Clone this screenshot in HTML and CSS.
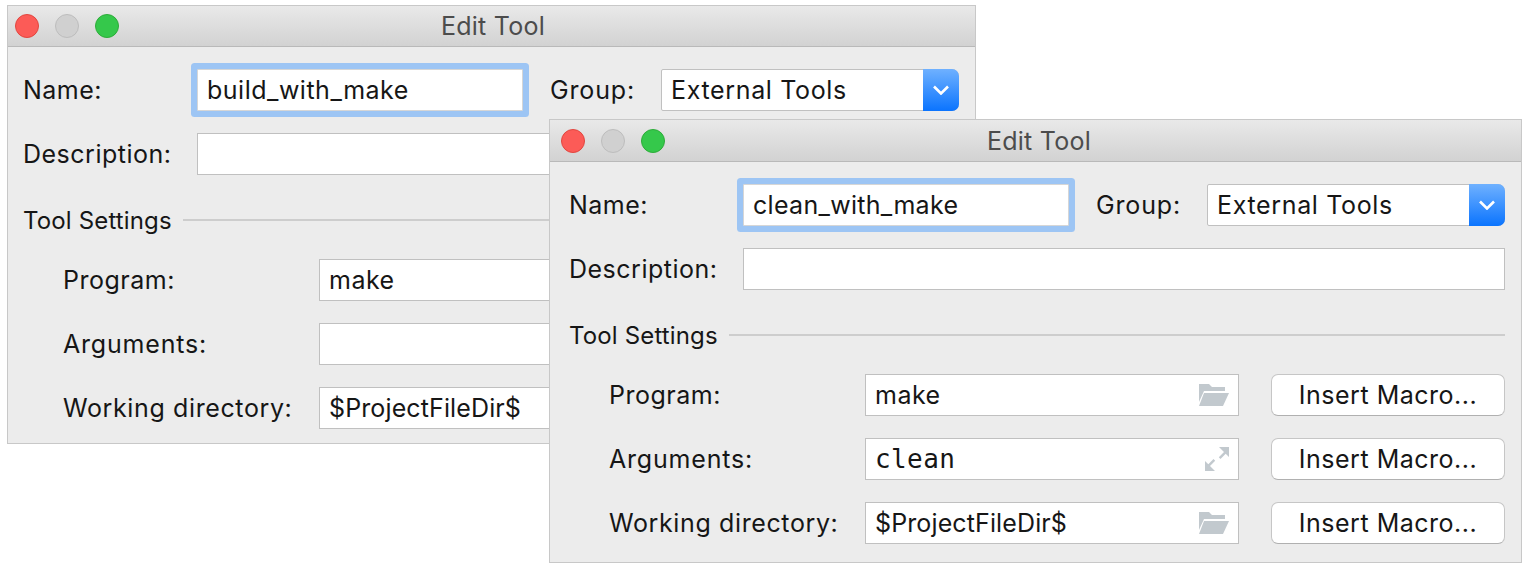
FILE: index.html
```html
<!DOCTYPE html>
<html lang="en">
<head>
<meta charset="utf-8">
<title>Edit Tool</title>
<link rel="stylesheet" href="styles.css">
</head>
<body>
<svg class="defs" width="0" height="0" aria-hidden="true">
  <symbol id="folder" viewBox="0 0 30 22"><path d="M0 0h10l3 3h13v4H5L0 18z"/><path d="M5 9h25l-6 13H0z"/></symbol>
  <symbol id="expand" viewBox="0 0 24 24"><path d="M14 0h10v10l-3.300-3.300-5.200 5.200-1.700-1.700 5.200-5.200z"/><path d="M10 24H0V14l3.300 3.300 5.200-5.200 1.700 1.700-5.200 5.200z"/></symbol>
  <symbol id="chevron" viewBox="0 0 16 10"><path d="M1 1.500 8 8.500l7-7" fill="none" stroke="#fff" stroke-width="2.600"/></symbol>
</svg>

<section class="window window-back">
  <header class="titlebar">
    <span class="light light-close"></span><span class="light light-min"></span><span class="light light-zoom"></span>
    <h1 class="title">Edit Tool</h1>
  </header>
  <div class="content">
    <div class="row">
      <label class="label label-top">Name:</label>
      <div class="field field-name focused">build_with_make</div>
      <label class="label label-group">Group:</label>
      <div class="select"><span class="select-text">External Tools</span><span class="select-btn"><svg class="chevron"><use href="#chevron"/></svg></span></div>
    </div>
    <div class="row">
      <label class="label label-top">Description:</label>
      <div class="field field-grow"></div>
    </div>
    <div class="section"><span>Tool Settings</span><i class="rule"></i></div>
    <div class="row row-sub">
      <label class="label label-sub">Program:</label>
      <div class="field field-grow">make</div>
    </div>
    <div class="row row-sub">
      <label class="label label-sub label-args">Arguments:</label>
      <div class="field field-grow"></div>
    </div>
    <div class="row row-sub">
      <label class="label label-sub label-dir">Working directory:</label>
      <div class="field field-grow"><span class="path">$ProjectFileDir$</span></div>
    </div>
  </div>
</section>

<section class="window window-front">
  <header class="titlebar">
    <span class="light light-close"></span><span class="light light-min"></span><span class="light light-zoom"></span>
    <h1 class="title">Edit Tool</h1>
  </header>
  <div class="content">
    <div class="row">
      <label class="label label-top">Name:</label>
      <div class="field field-name focused"><span class="name-clean">clean_with_make</span></div>
      <label class="label label-group">Group:</label>
      <div class="select"><span class="select-text">External Tools</span><span class="select-btn"><svg class="chevron"><use href="#chevron"/></svg></span></div>
    </div>
    <div class="row">
      <label class="label label-top">Description:</label>
      <div class="field field-grow"></div>
    </div>
    <div class="section"><span>Tool Settings</span><i class="rule"></i></div>
    <div class="row row-sub">
      <label class="label label-sub">Program:</label>
      <div class="field field-grow"><span>make</span><svg class="icon-folder"><use href="#folder"/></svg></div>
      <button class="button">Insert Macro...</button>
    </div>
    <div class="row row-sub">
      <label class="label label-sub label-args">Arguments:</label>
      <div class="field field-grow"><span class="mono">clean</span><svg class="icon-expand"><use href="#expand"/></svg></div>
      <button class="button">Insert Macro...</button>
    </div>
    <div class="row row-sub">
      <label class="label label-sub label-dir">Working directory:</label>
      <div class="field field-grow"><span class="path">$ProjectFileDir$</span><svg class="icon-folder"><use href="#folder"/></svg></div>
      <button class="button">Insert Macro...</button>
    </div>
  </div>
</section>
</body>
</html>
```

FILE: styles.css
```css
* { box-sizing: border-box; }
html, body { margin: 0; height: 100%; background: #fff; }
body { position: relative; overflow: hidden; font-family: Inter, "Noto Sans", sans-serif; font-size: 25px; letter-spacing: .5px; color: #161616; }
.defs { position: absolute; }

.window { position: absolute; background: #ececec; border: 1px solid #c8c8c8; overflow: hidden; }
.window-back { left: 7px; top: 5px; width: 969px; height: 439px; --pad: 16px; --title-shift: 3px; --bar: 41px; }
.window-front { left: 549px; top: 119px; width: 973px; height: 444px; --pad: 20px; --title-shift: 7px; --bar: 42px; }

.titlebar { position: relative; display: flex; align-items: center; gap: 16px; height: var(--bar); padding-left: calc(var(--pad) - 9px); background: linear-gradient(#e9e9e9, #d2d2d2); border-bottom: 1px solid #b9b9b9; }
.light { flex: none; width: 24px; height: 24px; border-radius: 50%; border: 1px solid; }
.light-close { background: #fc5b57; border-color: #e2463f; }
.light-min { background: #d0d0d0; border-color: #bdbdbd; }
.light-zoom { background: #35c84b; border-color: #2dac39; }
.title { position: absolute; inset: 0; margin: 0; padding-left: var(--title-shift); display: flex; align-items: center; justify-content: center; font-size: 25px; font-weight: 400; letter-spacing: .25px; color: #4c4c4c; }

.content { display: flex; flex-direction: column; gap: 22px; padding: 22px 16px 0 var(--pad); }
.row { display: flex; align-items: center; height: 42px; }
.row-sub { padding-left: 40px; }
.label { flex: none; margin-left: -1px; }
.label-top { width: 174px; }
.label-group { width: 138px; margin-left: 0; padding-left: 27px; letter-spacing: .85px; }
.label-sub { width: 256px; }
.label-args { letter-spacing: .8px; }
.label-dir { letter-spacing: .62px; }

.field { display: flex; align-items: center; justify-content: space-between; height: 42px; padding: 0 9px; background: #fff; border: 1px solid #c0c0c0; }
.field-name { flex: none; width: 326px; }
.field-grow { flex: 1; min-width: 0; }
.focused { box-shadow: 0 0 0 6px #9dc5f4; border-radius: 1px; border-color: #d6d6d6; }
.path { letter-spacing: .12px; }
.name-clean { letter-spacing: .3px; }

.select { flex: 1; min-width: 0; display: flex; height: 42px; background: #fff; border: 1px solid #c0c0c0; border-radius: 2px 7px 7px 2px; position: relative; }
.select-text { flex: 1; padding-left: 9px; line-height: 40px; letter-spacing: .65px; }
.select-btn { flex: none; width: 36px; margin: -1px -1px -1px 0; display: flex; align-items: center; justify-content: center; background: linear-gradient(#6fb1ff, #0b74fe); border-radius: 0 7px 7px 0; }
.chevron { width: 16px; height: 10px; }

.section { display: flex; align-items: center; gap: 11px; height: 24px; margin: 11px 0 5px -1px; font-size: 24px; letter-spacing: .15px; }
.rule { flex: 1; height: 2px; background: #cdcdcd; }

.mono { font-family: "DejaVu Sans Mono", "Liberation Mono", monospace; font-size: 26px; letter-spacing: .4px; }
.icon-folder { flex: none; width: 30px; height: 22px; fill: #c2c9ce; }
.icon-expand { flex: none; width: 24px; height: 24px; fill: #c2c9ce; }

.button { flex: none; width: 234px; height: 42px; margin-left: 32px; padding: 0; font: inherit; letter-spacing: inherit; color: inherit; background: #fff; border: 1px solid #c6c6c6; border-bottom-color: #b0b0b0; border-radius: 7px; }
```
